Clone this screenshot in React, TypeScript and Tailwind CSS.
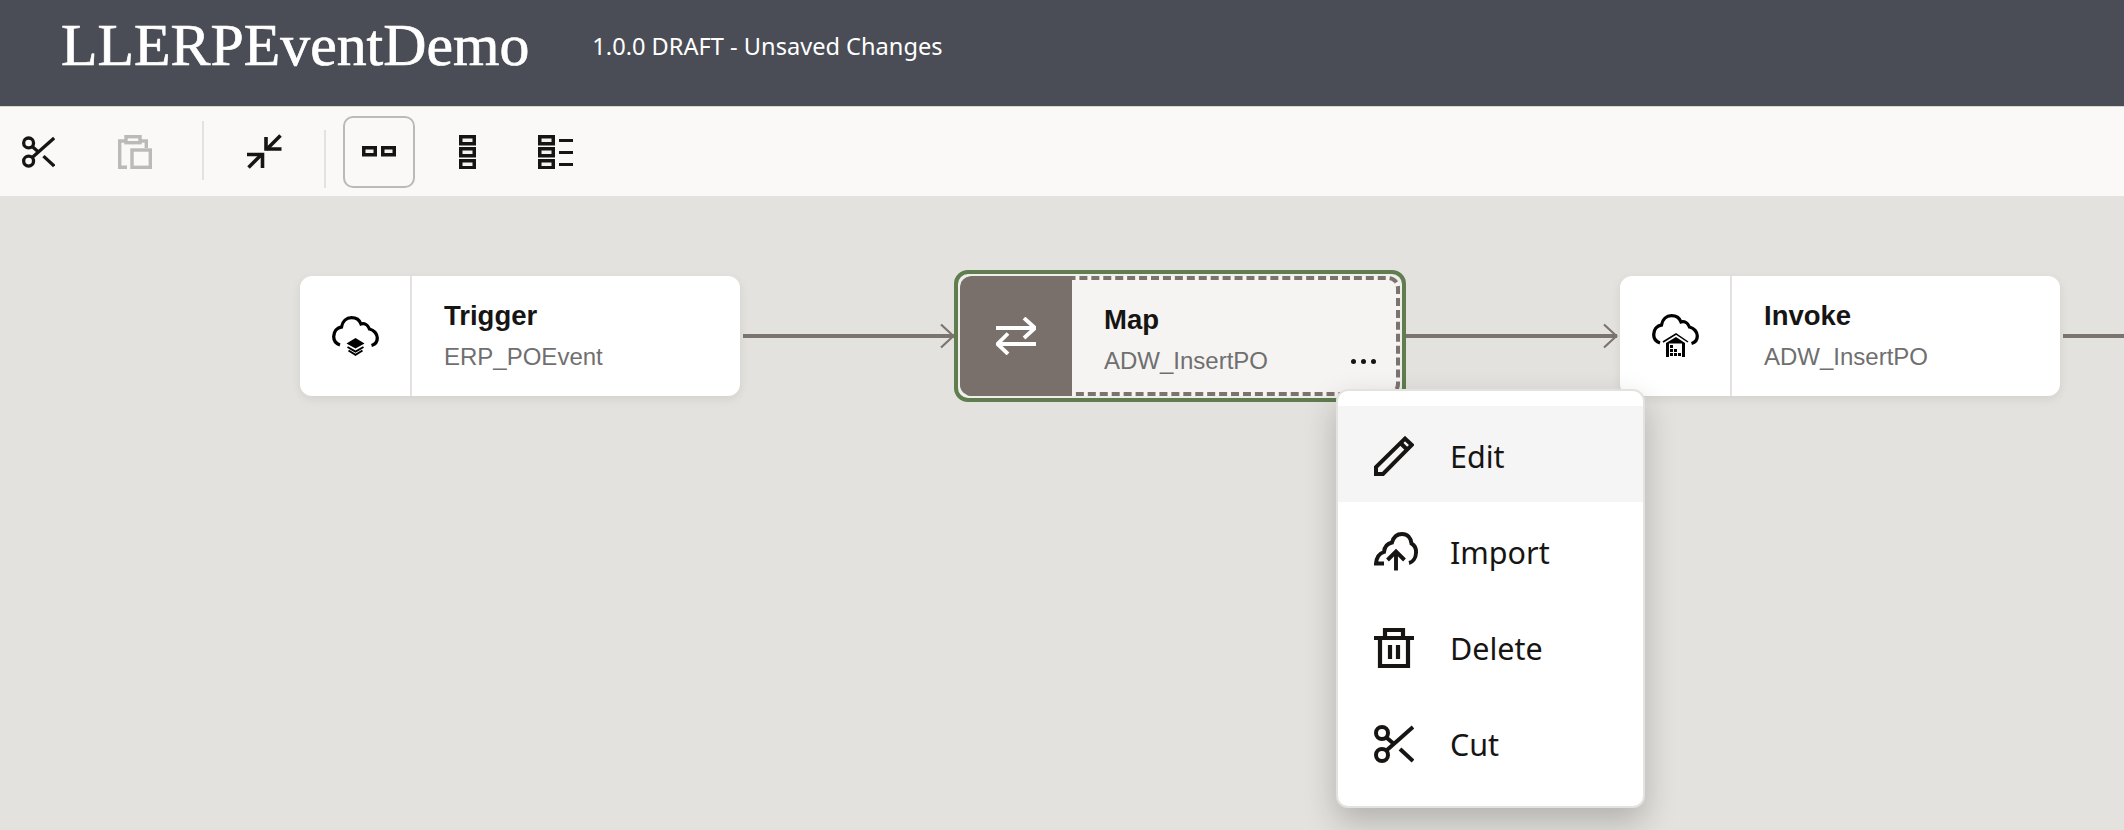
import React from "react";

const sans = "font-['Liberation_Sans',Arial,sans-serif]";

const Scissors = ({ className }: { className: string }) => (
  <svg viewBox="0 0 40 38" fill="none" stroke="currentColor" strokeWidth="4" className={className}>
    <circle cx="8" cy="8" r="6" />
    <circle cx="8" cy="30" r="6" />
    <path d="M13 25 L39 2" />
    <path d="M13 13 L20 19" />
    <path d="M26 24 L39 36" />
  </svg>
);

const Paste = () => (
  <svg viewBox="0 0 34 34" fill="none" stroke="currentColor" strokeWidth="3.4" className="w-[34px] h-[34px] text-[#bbbab8]">
    <path d="M8 6H1.7V32.3H9" />
    <rect x="8" y="1.7" width="14" height="6" />
    <path d="M22 6H28.3V13" />
    <rect x="14" y="15" width="18.3" height="17.3" />
  </svg>
);

const Compress = () => (
  <svg viewBox="0 0 35 35" fill="none" stroke="#161513" strokeWidth="3.6" className="w-[35px] h-[35px]">
    <path d="M33.5 1.5L19.5 15.5" />
    <path d="M19 3V15H34.5" />
    <path d="M1.5 33.5L15 20" />
    <path d="M0 20.5H15.5V34" />
  </svg>
);

const CloudOutline = () => (
  <path
    d="M8 29C3.5 27.5 1.7 24 1.7 20.5C1.7 15.5 5 11.5 9.5 11C10.5 5.5 14.5 1.7 19.5 1.7C24 1.7 27.5 4 29 8C32.5 7 36 9 37.5 13C42 14 45.3 18 45.3 22C45.3 25.5 43 28.5 39.5 29.5"
    fill="none"
    stroke="#000"
    strokeWidth="3.3"
  />
);

const CloudLayers = () => (
  <svg viewBox="0 0 47 40" className="w-[47px] h-[40px]">
    <CloudOutline />
    <path d="M23.5 22L14.5 27.5L23.5 32.5L32.5 27.5Z" fill="#000" />
    <path d="M15.5 31L23.5 35.5L31.5 31M16.5 34.5L23.5 38.8L30.5 34.5" fill="none" stroke="#000" strokeWidth="2" />
  </svg>
);

const CloudHouse = () => (
  <svg viewBox="0 0 47 44" className="w-[47px] h-[44px]">
    <CloudOutline />
    <path d="M11 28L24 20L36 28" fill="none" stroke="#000" strokeWidth="1.5" />
    <path d="M14 29L24 23L33 29V43H14Z" fill="#000" />
    <rect x="17" y="29.5" width="13" height="13.5" fill="#fff" />
    <path d="M18 31h3v3h-3zM18 35h3v3h-3zM22 35h3v3h-3zM18 39h3v3h-3zM22 39h3v3h-3zM26 39h3v3h-3z" fill="#000" />
  </svg>
);

const Swap = () => (
  <svg viewBox="0 0 40 38" fill="none" stroke="#fff" strokeWidth="3.8" className="w-[40px] h-[38px]">
    <path d="M0 11H38" />
    <path d="M28 1L39 11L28 21" />
    <path d="M40 27H2" />
    <path d="M12 16.5L1.5 27L12 37" />
  </svg>
);

const Pencil = () => (
  <svg viewBox="0 0 40 40" fill="none" stroke="#161513" strokeWidth="4" className="w-[40px] h-[40px]">
    <path d="M2 38V31L31 2.6L37.8 9L9 38Z" />
    <path d="M26.5 7L33.5 14" />
  </svg>
);

const CloudUp = () => (
  <svg viewBox="0 0 44 40" fill="none" stroke="#161513" strokeWidth="3.9" className="w-[44px] h-[40px]">
    <path d="M10 31.5H2C2.5 25.5 5 21.5 10 20C10.5 14.5 13.5 11.5 18 10.5C19.5 5 23.5 2 28 2C33.5 2 37 6 37.5 11.5C41 13.5 42.3 17 42 21C41.8 26 39 30 35 31" />
    <path d="M22 38.5V20" />
    <path d="M13.5 28L22 19.5L30.5 28" />
  </svg>
);

const Trash = () => (
  <svg viewBox="0 0 40 40" fill="none" stroke="#161513" strokeWidth="4.2" className="w-[40px] h-[40px]">
    <path d="M0 10H40" />
    <path d="M11 9V2H29V9" />
    <path d="M6 10V38H34V10" />
    <path d="M16 17V31M24 17V31" />
  </svg>
);

const Tiles = ({ variant }: { variant: "row" | "col" | "list" }) => {
  const cell = (x: number, y: number, w: number) => (
    <rect key={`${x}-${y}`} x={x + 1.75} y={y + 1.75} width={w - 3.5} height="7" fill="#f4f3f1" stroke="#161513" strokeWidth="3.5" />
  );
  if (variant === "row")
    return (
      <svg viewBox="0 0 34 11" className="w-[34px] h-[11px]">
        {cell(0, 0, 15)}
        {cell(19, 0, 15)}
      </svg>
    );
  return (
    <svg viewBox={variant === "col" ? "0 0 17 34" : "0 0 35 34"} className={variant === "col" ? "w-[17px] h-[34px]" : "w-[35px] h-[34px]"}>
      {[0, 12, 24].map((y) => cell(0, y, 17))}
      {variant === "list" && [4, 16, 28].map((y) => <rect key={y} x="21" y={y} width="14" height="3" fill="#161513" />)}
    </svg>
  );
};

const Edge = ({ arrow, className }: { arrow?: boolean; className: string }) => (
  <div className={`relative shrink-0 h-[4px] bg-[#7a736e] ${className}`}>
    {arrow && (
      <svg viewBox="0 0 16 26" fill="none" stroke="#7a736e" strokeWidth="2.2" className="absolute -right-px -top-[11px] w-[16px] h-[26px]">
        <path d="M2 1.5L14.5 13L2 24.5" />
      </svg>
    )}
  </div>
);

const Node = ({ title, sub, icon }: { title: string; sub: string; icon: React.ReactNode }) => (
  <div className="flex shrink-0 h-[120px] bg-white rounded-xl shadow-[0_3px_10px_rgba(0,0,0,0.08)]">
    <div className="w-[112px] flex items-center justify-center border-r-2 border-[#e3e2de]">{icon}</div>
    <div className={`w-[328px] pl-[32px] pt-[22px] ${sans}`}>
      <div className="text-[27.5px] leading-[36px] font-bold text-[#161513]">{title}</div>
      <div className="text-[24px] leading-[32px] mt-[7px] text-[#6f6f6f]">{sub}</div>
    </div>
  </div>
);

const items = [
  { label: "Edit", icon: <Pencil />, active: true },
  { label: "Import", icon: <CloudUp /> },
  { label: "Delete", icon: <Trash /> },
  { label: "Cut", icon: <Scissors className="w-[40px] h-[38px] text-[#161513]" /> },
];

export default function App() {
  return (
    <div className="h-[830px] w-[2124px] overflow-hidden flex flex-col bg-[#e3e2de]">
      <header className="h-[107px] shrink-0 flex items-start bg-[#4a4d55] border-b border-[#d9d8c8] pl-[61px] text-white">
        <h1 className="font-['Liberation_Serif',serif] text-[59.8px] leading-[90px] [-webkit-text-stroke:0.7px_white]">LLERPEventDemo</h1>
        <span className="ml-[63px] mt-[28px] font-['Noto_Sans',sans-serif] text-[23.6px] leading-[36px]">1.0.0 DRAFT - Unsaved Changes</span>
      </header>

      <div className="h-[89px] shrink-0 flex items-center bg-[#fbf9f8]">
        <Scissors className="ml-[22px] w-[33px] h-[32px] text-[#161513]" />
        <div className="ml-[63px]"><Paste /></div>
        <div className="ml-[50px] w-[2px] h-[59px] bg-[#e3e2de] -mt-[2px]" />
        <div className="ml-[43px]"><Compress /></div>
        <div className="ml-[42px] w-[2px] h-[58px] bg-[#e3e2de] mt-[15px]" />
        <div className="ml-[17px] w-[72px] h-[72px] flex items-center justify-center rounded-[10px] border-2 border-[#bbbab8]">
          <Tiles variant="row" />
        </div>
        <div className="ml-[44px]"><Tiles variant="col" /></div>
        <div className="ml-[62px]"><Tiles variant="list" /></div>
      </div>

      <main className="flex items-center h-[132px] mt-[74px] pl-[300px]">
        <Node title="Trigger" sub="ERP_POEvent" icon={<CloudLayers />} />
        <Edge arrow className="w-[211px] ml-[3px]" />
        <div className="relative w-[452px] h-[132px] shrink-0 p-[2px] rounded-[14px] border-4 border-[#5f7d4f] bg-[#efeeea]">
          <div className="flex h-full rounded-xl border-4 border-dashed border-[#7a736e] bg-[#f5f4f2]">
            <div className="w-[112px] -my-1 -ml-1 shrink-0 flex items-center justify-center rounded-l-xl bg-[#7a706b]">
              <Swap />
            </div>
            <div className={`relative flex-1 pl-[32px] pt-[22px] ${sans}`}>
              <div className="text-[27.5px] leading-[36px] font-bold text-[#161513]">Map</div>
              <div className="text-[24px] leading-[32px] mt-[7px] text-[#6f6f6f]">ADW_InsertPO</div>
              <div className="absolute left-[279px] top-[79px] flex gap-[5px]">
                <span className="w-[5px] h-[5px] rounded-full bg-[#161513]" />
                <span className="w-[5px] h-[5px] rounded-full bg-[#161513]" />
                <span className="w-[5px] h-[5px] rounded-full bg-[#161513]" />
              </div>
            </div>
          </div>

          <div className="absolute z-10 left-[378px] top-[115px] w-[309px] h-[419px] pt-[15px] rounded-xl border-2 border-[#e3e2de] bg-white shadow-[0_14px_32px_rgba(0,0,0,0.22)]">
            {items.map((it) => (
              <div key={it.label} className={`flex items-center h-[96px] ${it.active ? "bg-[#f5f5f5]" : ""}`}>
                <div className="w-[44px] ml-[36px] mt-[4px] flex justify-start">{it.icon}</div>
                <span className="ml-[32px] mt-[6px] font-['Noto_Sans',sans-serif] text-[30.5px] text-[#161513]">{it.label}</span>
              </div>
            ))}
          </div>
        </div>
        <Edge arrow className="w-[211px] mr-[3px]" />
        <Node title="Invoke" sub="ADW_InsertPO" icon={<CloudHouse />} />
        <Edge className="w-[70px] ml-[3px]" />
      </main>
    </div>
  );
}
